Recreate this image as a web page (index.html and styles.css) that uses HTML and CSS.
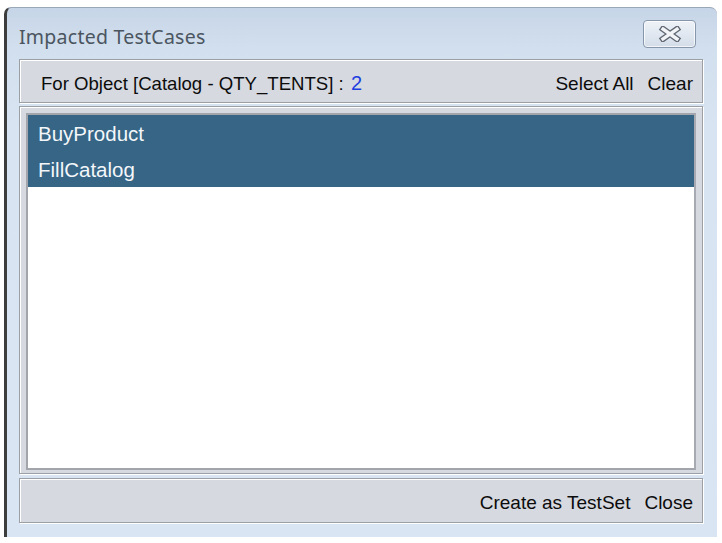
FILE: index.html
```html
<!DOCTYPE html>
<html>
<head>
<meta charset="utf-8">
<link rel="stylesheet" href="styles.css">
</head>
<body>
<div class="window">
  <div class="titlebar">
    <span class="title">Impacted TestCases</span>
    <button class="close-btn" aria-label="Close">
      <svg width="24" height="16" viewBox="0 0 24 16">
        <path d="M5 3 L19 13 M19 3 L5 13" stroke="#5f6670" stroke-width="6" stroke-linecap="square"/>
        <path d="M5 3 L19 13 M19 3 L5 13" stroke="#f2f4f7" stroke-width="3.4" stroke-linecap="square"/>
      </svg>
    </button>
  </div>
  <div class="panel header">
    <span class="label">For Object [Catalog - QTY_TENTS] : <span class="count">2</span></span>
    <span class="actions"><span>Select All</span><span>Clear</span></span>
  </div>
  <div class="panel listpanel">
    <div class="list">
      <div class="row selected">BuyProduct</div>
      <div class="row selected">FillCatalog</div>
    </div>
  </div>
  <div class="panel footer">
    <span class="actions"><span>Create as TestSet</span><span>Close</span></span>
  </div>
</div>
</body>
</html>
```

FILE: styles.css
```css
html, body {
  margin: 0;
  padding: 0;
  background: #ffffff;
}
body {
  width: 722px;
  height: 543px;
  overflow: hidden;
}
.window {
  margin: 7px 0 0 4px;
  width: 713px;
  height: 530px;
  box-sizing: border-box;
  border-left: 3px solid #3d3d3d;
  border-top: 1px solid #9aa7b5;
  border-top-left-radius: 7px;
  border-top-right-radius: 7px;
  background: linear-gradient(180deg, #c6d5e7 0px, #d2dfee 40px, #d8e4f1 120px, #d9e5f2 100%);
  padding: 0 16px 0 12px;
  display: flex;
  flex-direction: column;
  font-family: "Liberation Sans", Arial, sans-serif;
  color: #0c0c0c;
}
.titlebar {
  height: 51px;
  display: flex;
  align-items: center;
  justify-content: space-between;
  padding-top: 1px;
  box-sizing: border-box;
}
.title {
  font-family: "Noto Sans", "Open Sans", sans-serif;
  font-size: 19.5px;
  color: #4b5560;
  letter-spacing: 0.25px;
  margin-top: 5px;
}
.close-btn {
  width: 53px;
  height: 28px;
  margin-right: 5px;
  padding: 0;
  border: 1px solid #8797ab;
  border-radius: 4px;
  background: linear-gradient(180deg, #eef2f7 0%, #e1e8f1 50%, #d3dce8 100%);
  box-shadow: inset 0 0 0 1px rgba(255,255,255,0.7);
  display: flex;
  align-items: center;
  justify-content: center;
}
.close-btn svg {
  display: block;
}
.panel {
  box-sizing: border-box;
  width: 684px;
  border: 1px solid #9b9fa6;
  box-shadow: inset 1px 1px 0 #ffffff, 1px 1px 0 #ffffff;
  background: #d6d9e0;
}
.header {
  height: 44px;
  display: flex;
  align-items: center;
  justify-content: space-between;
  padding: 5px 9px 0 21px;
  font-size: 18.6px;
}
.count {
  color: #1f3ee0;
  font-size: 20px;
  margin-left: 2px;
}
.actions {
  display: flex;
  gap: 14px;
  font-size: 19px;
}
.listpanel {
  margin-top: 3px;
  height: 368px;
  padding: 6px 6px 3px 6px;
}
.list {
  box-sizing: border-box;
  height: 100%;
  border: 2px solid #a2a5ab;
  border-right-color: #a7aab0;
  background: #ffffff;
}
.row {
  height: 36px;
  line-height: 37px;
  padding-left: 10px;
  font-size: 20.5px;
}
.row.selected {
  background: #366585;
  color: #f4f7fa;
}
.footer {
  margin-top: 4px;
  height: 45px;
  display: flex;
  align-items: center;
  justify-content: flex-end;
  padding: 5px 9px 0 0;
}
```
